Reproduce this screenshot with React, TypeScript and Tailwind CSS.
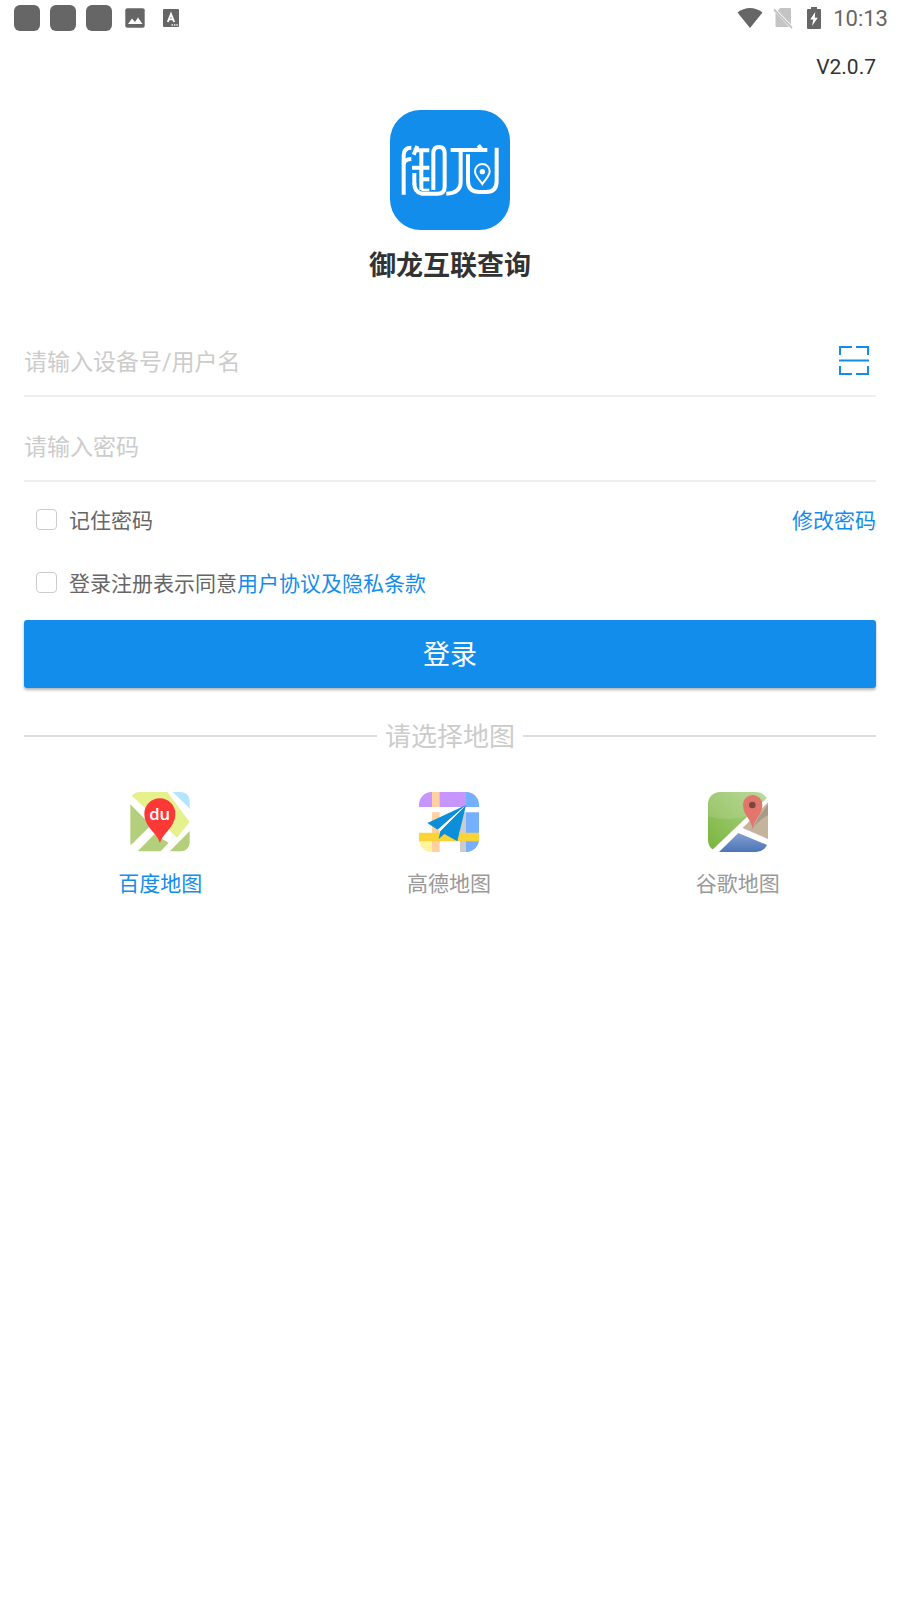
import React, { useState } from "react";

const StatusBar = () => (
  <header className="flex h-9 items-center justify-between pl-3.5 pr-3 text-[#666666]">
    <div className="flex items-center gap-2.5">
      <span className="size-[26px] rounded-md bg-[#666666]" />
      <span className="size-[26px] rounded-md bg-[#666666]" />
      <span className="size-[26px] rounded-md bg-[#666666]" />
      <svg className="ml-[3px] h-5 w-5" viewBox="0 0 20 20">
        <rect x="0.3" y="0.3" width="19.4" height="19.4" rx="2" fill="#666666" />
        <path d="M3 16 7 10.5 10 14 13 9.5 17.5 16Z" fill="#fff" />
      </svg>
      <svg className="ml-2 h-[18px] w-4" viewBox="0 0 16 18">
        <rect width="16" height="18" rx="1" fill="#666666" />
        <path d="M4.8 13 8 5 11.2 13M6 10.4H10" fill="none" stroke="#fff" strokeWidth="1.9" />
        <path d="M8.5 16h1.4M11 16h1.4M13.4 16h1.4" stroke="#fff" strokeWidth="1.3" />
      </svg>
    </div>
    <div className="flex items-center">
      <svg className="h-[22px] w-[26px]" viewBox="0 0 26 22">
        <path d="M0.5 5.5C8-.5 18-.5 25.5 5.5L13 21Z" fill="#666666" />
      </svg>
      <svg className="ml-2.5 h-[22px] w-5" viewBox="0 0 20 22">
        <path d="M7 1H17a1 1 0 0 1 1 1V17.6L4.7 3.8ZM2.5 5.5 16 20H3.5a1 1 0 0 1-1-1Z" fill="#c4c4c4" />
        <path d="M1 2.5 19 21" stroke="#c4c4c4" strokeWidth="1.8" />
      </svg>
      <svg className="ml-3.5 h-[22px] w-3.5" viewBox="0 0 14 22">
        <path d="M4 0h6v2h3a1 1 0 0 1 1 1v18a1 1 0 0 1-1 1H1a1 1 0 0 1-1-1V3a1 1 0 0 1 1-1h3Z" fill="#666666" />
        <path d="M8.2 5 3.2 12.6H6.3L5 19 10.8 10.8H7.8Z" fill="#fff" />
      </svg>
      <span className="ml-3 pt-0.5 text-[22px] leading-6">10:13</span>
    </div>
  </header>
);

const Logo = () => (
  <svg className="size-[120px]" viewBox="30 30 360 360" aria-hidden="true">
    <rect x="30" y="30" width="360" height="360" rx="92" fill="#138dec" />
    <g fill="none" stroke="#fff" strokeWidth="12">
      <path d="M71 284V166Q71 143 94 143" />
      <path d="M71 192Q73 178 94 177" />
      <path d="M112 138 101 164M101 151H148M96 203H148M124 151V270M103 219V254M124 238H148" />
      <path d="M160 270V160Q160 141 177 141Q194 141 194 160V260Q194 281 172 281H124Q103 276 103 250" />
      <path d="M124 270H148" strokeWidth="8" />
      <path d="M212 150H322M242 150V245Q242 279 199 281" />
      <path d="M264 163V243Q264 276 300 276H318Q350 276 350 243V143" />
      <path d="M295 136 308 153" />
    </g>
    <path
      d="M307 252C299 239 285 229 285 214A22 22 0 0 1 329 214C329 229 315 239 307 252Z"
      fill="none"
      stroke="#fff"
      strokeWidth="6"
    />
    <circle cx="307" cy="215" r="8" fill="#fff" />
  </svg>
);

const ScanIcon = () => (
  <svg className="size-[30px]" viewBox="0 0 30 30" fill="none" stroke="#138dec" strokeWidth="2">
    <path d="M1 10V2H13M17 2H29V10M1 21V29H13M17 29H29V21M0 15.5H30" />
  </svg>
);

const BaiduIcon = () => (
  <svg className="size-[60px]" viewBox="89 37 180 180">
    <clipPath id="baidu">
      <rect x="90" y="37" width="178" height="178" rx="26" />
    </clipPath>
    <g clipPath="url(#baidu)">
      <rect x="89" y="37" width="180" height="180" fill="#fff" />
      <path d="M95 37H201L268 127 230 174 95 49Z" fill="#e6f18d" />
      <path d="M217 37H269V87Z" fill="#b3e5fd" />
      <path d="M89 73 152 137 89 199Z" fill="#b3cf7b" />
      <path d="M110 217 162 164 205 189 179 217Z" fill="#b3cf7b" />
      <path d="M206 217 269 153V217Z" fill="#b3cf7b" />
    </g>
    <path d="M179 190C170 158 132 143 132 102A46 46 0 0 1 225 102C225 143 188 158 179 190Z" fill="#fc3936" />
    <text x="178" y="121" textAnchor="middle" fill="#fff" className="font-['Open_Sans'] text-[50px] font-semibold">
      du
    </text>
  </svg>
);

const GaodeIcon = () => (
  <svg className="size-[60px]" viewBox="87 37 180 180">
    <clipPath id="gaode">
      <rect x="87" y="37" width="180" height="180" rx="38" />
    </clipPath>
    <g clipPath="url(#gaode)">
      <rect x="87" y="37" width="180" height="180" fill="#fff" />
      <path d="M87 37H228V82H87Z" fill="#c695fd" />
      <path d="M228 37H267V82H228ZM228 98H267V217H228Z" fill="#75afff" />
      <path d="M126 37H149V82H126ZM126 98H149V217H126Z" fill="#ffd0a1" />
      <path d="M87 185H126V217H87Z" fill="#fff49d" />
      <path d="M210 98H228V217H210Z" fill="#cacccd" />
      <path d="M87 159H267V185H87Z" fill="#fbd337" />
    </g>
    <path d="M228 76 112 130 143 150Z" fill="#0b8fdb" />
    <path d="M228 76 151 154 146 178 163 163 202 185Z" fill="#0b8fdb" />
    <path d="M228 76 143 150 151 154Z" fill="#fff" />
  </svg>
);

const GoogleIcon = () => (
  <svg className="size-[60px]" viewBox="84 37 180 180">
    <defs>
      <clipPath id="google">
        <rect x="84" y="37" width="180" height="180" rx="36" />
      </clipPath>
      <linearGradient id="land" x1="0" y1="1" x2="1" y2="0">
        <stop offset="0" stopColor="#79b43c" />
        <stop offset="1" stopColor="#b3d58f" />
      </linearGradient>
      <linearGradient id="water" x1="0" y1="0" x2="0" y2="1">
        <stop offset="0" stopColor="#86a0d0" />
        <stop offset="1" stopColor="#4b74b7" />
      </linearGradient>
    </defs>
    <g clipPath="url(#google)">
      <rect x="84" y="37" width="180" height="180" fill="#fff" />
      <path d="M84 37H264V52L99 209 84 217Z" fill="url(#land)" />
      <path d="M84 37H264V52L208 106C165 122 122 120 84 110Z" fill="#fff" opacity="0.12" />
      <path d="M117 217 175 160 264 197V217Z" fill="url(#water)" />
      <path d="M188 145 264 68V178Z" fill="#c5b39c" />
      <path d="M217 147 237 111 264 75V107Q242 116 217 147Z" fill="#a99a87" />
    </g>
    <path d="M218 149C214 116 189 108 189 75A29 29 0 0 1 247 75C247 108 222 116 218 149Z" fill="#e2766c" />
    <circle cx="217" cy="76" r="10" fill="#7c4540" />
  </svg>
);

const maps = [
  { id: "baidu", label: "百度地图", icon: <BaiduIcon /> },
  { id: "gaode", label: "高德地图", icon: <GaodeIcon /> },
  { id: "google", label: "谷歌地图", icon: <GoogleIcon /> },
];

const inputClass =
  "min-w-0 flex-1 bg-transparent text-[23px] leading-8 text-[#333333] outline-none placeholder:text-[#cccccc]";
const checkClass =
  "mb-1 size-[21px] shrink-0 appearance-none rounded border border-[#cccccc] bg-white checked:border-[#138dec] checked:bg-[#138dec]";

const App = () => {
  const [account, setAccount] = useState("");
  const [password, setPassword] = useState("");
  const [remember, setRemember] = useState(false);
  const [agree, setAgree] = useState(false);
  const [map, setMap] = useState("baidu");

  const handleSubmit = (e: React.FormEvent) => {
    e.preventDefault();
  };

  return (
    <div className="min-h-screen bg-white font-[Roboto,'Noto_Sans_CJK_SC',sans-serif] text-[#333333]">
      <StatusBar />
      <main>
        <p className="px-6 pt-[15px] text-right text-[21px] leading-8">V2.0.7</p>
        <div className="flex flex-col items-center pt-[27px]">
          <Logo />
          <h1 className="mt-4 text-[27px] leading-10 font-bold">御龙互联查询</h1>
        </div>

        <form onSubmit={handleSubmit} className="px-6 pt-[26px]">
          <div className="flex h-[85px] items-end border-b-2 border-[#eeeeee] pr-[7px] pb-4">
            <input
              type="text"
              aria-label="设备号/用户名"
              placeholder="请输入设备号/用户名"
              value={account}
              onChange={(e) => setAccount(e.target.value)}
              className={inputClass}
            />
            <button type="button" aria-label="扫一扫" className="pb-1">
              <ScanIcon />
            </button>
          </div>
          <div className="flex h-[85px] items-end border-b-2 border-[#eeeeee] pb-4">
            <input
              type="password"
              aria-label="密码"
              placeholder="请输入密码"
              value={password}
              onChange={(e) => setPassword(e.target.value)}
              className={inputClass}
            />
          </div>

          <div className="mt-[23px] flex items-center justify-between text-[21px] leading-8">
            <label className="flex items-center gap-3 pl-3 text-[#666666]">
              <input
                type="checkbox"
                checked={remember}
                onChange={(e) => setRemember(e.target.checked)}
                className={checkClass}
              />
              记住密码
            </label>
            <a href="#" className="text-[#138dec]">修改密码</a>
          </div>
          <div className="mt-[31px] flex items-center pl-3 text-[21px] leading-8">
            <label className="flex items-center gap-3 text-[#666666]">
              <input
                type="checkbox"
                checked={agree}
                onChange={(e) => setAgree(e.target.checked)}
                className={checkClass}
              />
              登录注册表示同意
            </label>
            <a href="#" className="text-[#138dec]">用户协议及隐私条款</a>
          </div>

          <button
            type="submit"
            className="mt-5 h-[68px] w-full rounded-[3px] bg-[#138dec] pt-0.5 text-[27px] text-white shadow-[0_2px_3px_rgba(0,0,0,0.3)]"
          >
            登录
          </button>
        </form>

        <div className="mt-7 flex items-center gap-2 px-6">
          <span className="h-0.5 flex-1 bg-[#dddddd]" />
          <span className="pt-0.5 text-[26px] leading-[38px] text-[#cccccc]">请选择地图</span>
          <span className="h-0.5 flex-1 bg-[#dddddd]" />
        </div>

        <div className="mt-9 grid grid-cols-3 pr-[18px] pl-4">
          {maps.map((item) => (
            <button
              key={item.id}
              type="button"
              onClick={() => setMap(item.id)}
              className="flex flex-col items-center gap-4 text-[21px] leading-8"
            >
              {item.icon}
              <span className={map === item.id ? "text-[#138dec]" : "text-[#999999]"}>{item.label}</span>
            </button>
          ))}
        </div>
      </main>
    </div>
  );
};

export default App;
